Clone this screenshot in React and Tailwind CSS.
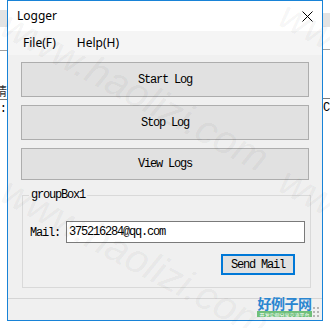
export default function App() {
  const mono = "font-['Liberation_Mono',monospace] text-[12px] tracking-[-1.2px] text-black";
  const btn = "ml-[13px] w-[288px] border border-[#adadad] bg-[#e1e1e1] flex items-center justify-center";
  const wm = "absolute origin-top-left rotate-[28deg] whitespace-nowrap text-[40px] italic leading-none text-black/[0.055] font-['Liberation_Sans',sans-serif]";
  return (
    <div className="relative w-[330px] h-[328px] bg-white overflow-hidden flex items-start font-['Noto_Sans',sans-serif]">
      {/* left background strip */}
      <div className="w-[7px] shrink-0 flex flex-col">
        <div className="h-[10px]" />
        <div className="h-[17px] bg-[#e3e3e3]" />
        <div className="h-[23px]" />
        <div className="h-[1px] bg-[#a0a0a0]" />
        <div className="h-[33px]" />
        <div className="h-[13px] overflow-hidden flex justify-end">
          <span className="shrink-0 text-[12px] leading-[13px] text-[#333] font-['Noto_Sans_CJK_SC',sans-serif]">睛</span>
        </div>
        <div className="h-[2px]" />
        <div className="h-[1px] bg-[#7a7a7a]" />
        <div className="h-[3px]" />
        <div className="h-[13px] overflow-hidden flex justify-end">
          <span className="shrink-0 text-[12px] leading-[13px] text-black font-['Liberation_Mono',monospace]">0:</span>
        </div>
      </div>

      {/* window */}
      <div className="w-[316px] h-[321px] shrink-0 border border-[#1883d7] bg-[#f0f0f0] flex flex-col">
        {/* title bar */}
        <div className="h-[30px] bg-white flex items-center pl-[9px] pr-[9px]">
          <span className="text-[12px] leading-none text-black">Logger</span>
          <svg className="ml-auto" width="11" height="11" viewBox="0 0 11 11">
            <path d="M0.5 0.5 L10.5 10.5 M10.5 0.5 L0.5 10.5" stroke="#000" strokeWidth="1" fill="none" />
          </svg>
        </div>
        {/* menu bar */}
        <div className="h-[24px] bg-[#f5f5f5] flex items-center pl-[15px] gap-[21px] text-[12px] text-black">
          <span>File(F)</span>
          <span>Help(H)</span>
        </div>
        {/* client */}
        <div className="flex-1 flex flex-col pt-[7px]">
          <div className={`${btn} h-[35px]`}>
            <span className={mono}>Start Log</span>
          </div>
          <div className={`${btn} h-[35px] mt-[8px]`}>
            <span className={mono}>Stop Log</span>
          </div>
          <div className={`${btn} h-[32px] mt-[8px]`}>
            <span className={mono}>View Logs</span>
          </div>
          <fieldset className="ml-[14px] w-[289px] mt-[9px] border border-[#d9d9d9] p-0 m-0">
            <legend className={`${mono} ml-[6px] px-[2px] leading-[12px]`}>groupBox1</legend>
            <div className="mt-[20px] pl-[7px] flex items-center">
              <span className={`${mono} w-[30px] mr-[6px] mt-[1px]`}>Mail:</span>
              <div className="w-[239px] h-[22px] border border-[#7a7a7a] bg-white flex items-center pl-[2px]">
                <span className={`${mono} leading-none`}>375216284@qq.com</span>
              </div>
            </div>
            <div className="mt-[11px] mb-[12px] ml-[198px] w-[74px] h-[21px] border-2 border-[#0078d7] bg-[#e1e1e1] flex items-center justify-center">
              <span className={mono}>Send Mail</span>
            </div>
          </fieldset>
          <div className="mt-[10px] h-[1px] bg-[#d5d5d5]" />
        </div>
      </div>

      {/* right background strip */}
      <div className="w-[7px] shrink-0 flex flex-col">
        <div className="h-[13px]" />
        <div className="h-[14px] bg-[#e3e3e3]" />
        <div className="h-[22px]" />
        <div className="h-[1px] bg-[#a0a0a0]" />
        <div className="h-[48px]" />
        <div className="h-[1px] bg-[#7a7a7a]" />
        <div className="h-[3px]" />
        <div className="h-[13px] overflow-hidden flex justify-start">
          <span className="shrink-0 text-[12px] leading-[13px] text-black font-['Liberation_Mono',monospace]">C</span>
        </div>
      </div>

      {/* watermark */}
      <div className="absolute inset-0 pointer-events-none overflow-hidden">
        <span className={`${wm} left-[14px] top-[4px]`}>www.haolizi.com</span>
        <span className={`${wm} left-[14px] top-[170px]`}>www.haolizi.com</span>
        <span className={`${wm} left-[292px] top-[-6px]`}>www.haolizi.com</span>
        <span className={`${wm} left-[292px] top-[160px]`}>www.haolizi.com</span>
      </div>

      {/* site logo */}
      <div className="absolute left-[257px] top-[296px] w-[55px] flex flex-col items-stretch">
        <span className="text-[14px] leading-[15px] font-bold text-[#2a86d1] tracking-[-0.5px] font-['Noto_Sans_CJK_SC',serif] text-center">好例子网</span>
        <div className="h-[6px] bg-[#6fbf7a] flex items-center justify-center overflow-hidden">
          <span className="text-[5px] leading-none text-white whitespace-nowrap font-['Noto_Sans_CJK_SC',sans-serif]">开发实例分享交流平台</span>
        </div>
      </div>

      {/* resize grip */}
      <div className="absolute left-[313px] top-[307px] grid grid-cols-2 gap-[2px]">
        <div className="w-[2px] h-[2px] bg-[#b5b5b5]" />
        <div className="w-[2px] h-[2px] bg-[#b5b5b5]" />
        <div className="w-[2px] h-[2px] bg-[#b5b5b5]" />
        <div className="w-[2px] h-[2px] bg-[#b5b5b5]" />
        <div className="w-[2px] h-[2px] bg-[#b5b5b5]" />
        <div className="w-[2px] h-[2px] bg-[#b5b5b5]" />
      </div>
    </div>
  );
}
